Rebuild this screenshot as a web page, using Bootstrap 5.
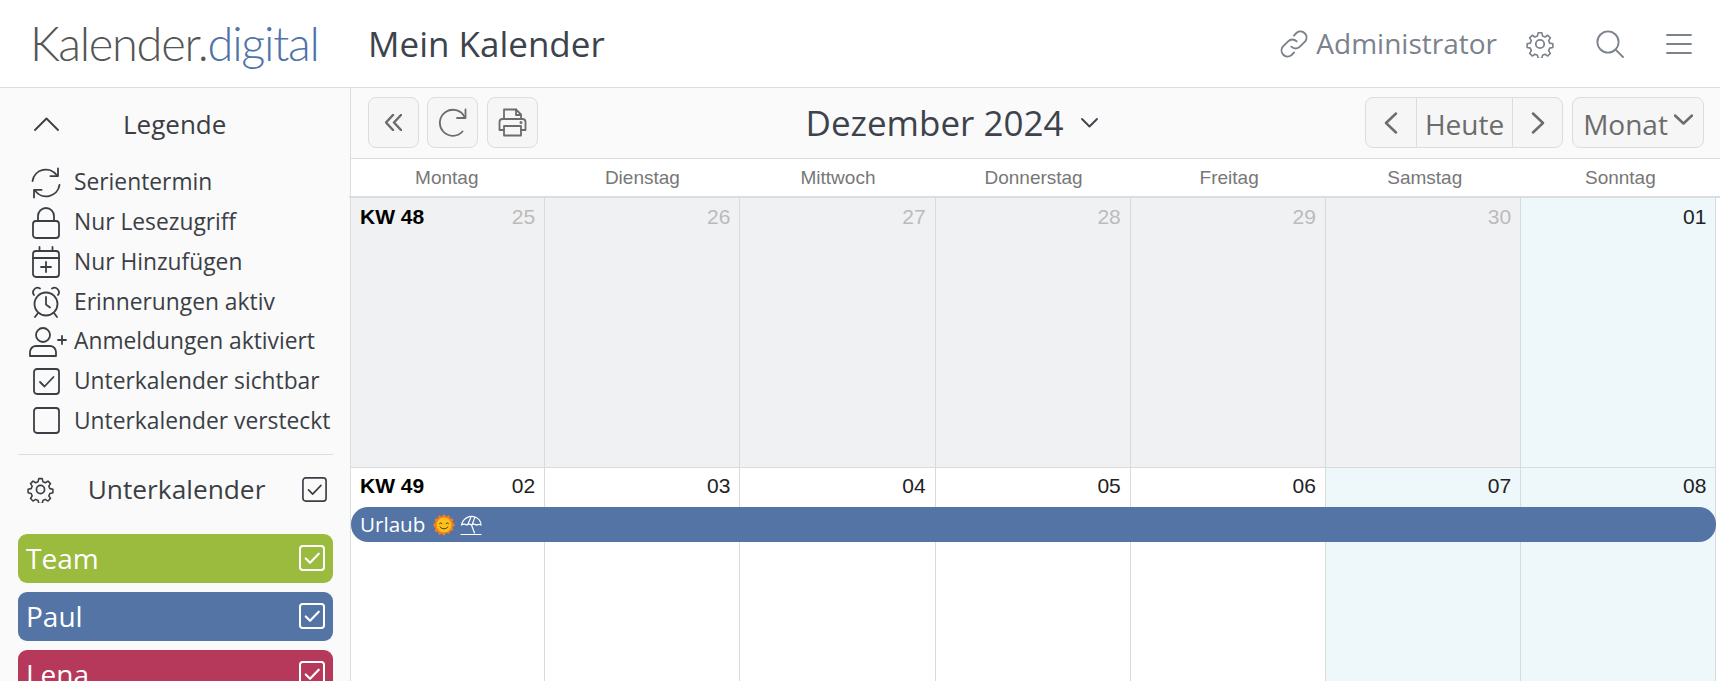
<!DOCTYPE html>
<html lang="de">
<head>
<meta charset="utf-8">
<title>Kalender.digital</title>
<link href="https://cdn.jsdelivr.net/npm/bootstrap@5.3.0/dist/css/bootstrap.min.css" rel="stylesheet">
<style>
html,body{height:100%;overflow:hidden}
body{font-family:"Open Sans",sans-serif;color:#3b3f45;background:#fff}
svg{fill:none;stroke:currentColor;stroke-width:1.8;stroke-linecap:round;stroke-linejoin:round;flex:none}
.topbar{height:88px;border-bottom:1px solid #ddd;padding:0 28px 0 30px}
.logo-text{font-family:"Lato",sans-serif;font-weight:300;font-size:47px;letter-spacing:-1.3px;color:#555;width:338px;line-height:1}
.logo-text span{color:#4f73a8}
.page-title{font-size:35px;color:#3c434c;line-height:1}
.admin-link{font-size:28px;color:#7b828b;margin-right:29px;gap:6px}
.admin-link span{margin-top:-2px}
.top-icon{color:#7b828b;margin-left:42px}
.app-body{height:593px}
.side-panel{width:351px;background:#fafafa;border-right:1px solid #ddd;padding:0 17px 0 18px;overflow:hidden}
.legend-head{height:75px;font-size:26px;padding:0 0 3px 16px}
.legend-head span{margin-left:64px}
.legend-row{height:39.7px;font-size:22.8px;line-height:1;gap:0;white-space:nowrap}
.legend-icon{width:56px;display:flex;justify-content:center}
.user-plus{margin-left:4px}
.side-sep{border-top:1px solid #ddd;margin:13px 0 0;opacity:1}
.sub-head{height:79px;font-size:26.3px;padding:0 6px 10px 9px}
.sub-head span{margin-left:-3px}
.sub-chip{height:49px;border-radius:9px;color:#fff;font-size:28px;padding:0 8px 0 8px;margin-bottom:9px}
.sub-chip svg{stroke-width:2.2}
.chip-team{background:#9abb3d}
.chip-paul{background:#5474a6}
.chip-lena{background:#b6395c}
.main-panel{flex:1;min-width:0;background:#fafafa}
.tool-bar{height:70px;padding:9px 16px 0 17px;align-items:flex-start}
.left-tools{gap:8px}
.left-tools .print-btn{margin-left:1px}
.tool-btn{width:51px;height:51px;padding:0;background:#f6f6f6;border:1px solid #ddd;border-radius:8px;color:#6c6c6c;display:flex;align-items:center;justify-content:center;font-size:28px}
.tool-btn:hover{background:#f6f6f6;border-color:#ddd;color:#6c6c6c}
.tool-btn .bold-icon{stroke-width:2.5}
.tool-label{padding-top:2px}
.tool-month{width:132px;margin-left:9px;gap:6px}
.tool-month svg{margin-bottom:6px}
.nav-group .tool-btn{width:51px}
.nav-group .first-btn{width:52px}
.nav-group .tool-wide{width:97px}
.month-title{font-size:35px;color:#3c434c;line-height:1;gap:17px;height:51px}
.cal-grid{background:#fff;border-top:1px solid #ddd;height:523px}
.cal-row{display:grid;grid-template-columns:194.2px repeat(6,195.2px);width:1365.2px}
.cal-head{height:39px;border-bottom:2px solid #dcdde0;font-family:"Liberation Sans",sans-serif;font-size:19px;color:#777;grid-template-columns:repeat(7,195.6px);width:1371.3px;margin-left:-2px;padding-left:0}
.cal-head div{text-align:center;line-height:38px}
.cal-cell{border-right:1px solid #d8dadc;font-family:"Liberation Sans",sans-serif;font-size:21px;color:#222;padding:5px 9px 0;line-height:26px}
.row-first .cal-cell{height:270px;border-bottom:1px solid #d8dadc;padding-top:6px}
.row-second .cal-cell{height:214px}
.cell-past{background:#f0f1f3;color:#bbb}
.cell-free{background:#eef8fb}
.week-no{font-weight:700;color:#000}
.event-bar{position:absolute;left:0;top:39px;width:100%;height:35px;border-radius:17px;background:#5474a6;color:#fff;font-size:20.6px;padding:0 9px;gap:8px}
.event-bar .beach-icon{margin-left:-3px;stroke-width:1.2}
.event-bar .sun-face{stroke-width:1}
</style>
</head>
<body>
<nav class="navbar topbar d-flex align-items-center flex-nowrap">
  <div class="d-flex align-items-center">
    <div class="logo-text">Kalender.<span>digital</span></div>
    <div class="page-title">Mein Kalender</div>
  </div>
  <div class="d-flex align-items-center">
    <div class="admin-link d-flex align-items-center">
      <svg width="32" height="32" viewBox="0 0 30 30"><path d="M12.5 17.5a5.6 5.6 0 0 0 8 0l5-5a5.7 5.7 0 0 0-8-8l-2.600 2.600"/><path d="M17.5 12.5a5.6 5.6 0 0 0-8 0l-5 5a5.7 5.7 0 0 0 8 8l2.600-2.600"/></svg>
      <span>Administrator</span>
    </div>
    <svg class="top-icon m-0" width="28" height="28" viewBox="0 0 28 28"><circle cx="14" cy="14" r="4.200"/><path d="M12 1.500h4l.8 3.500 2.800 1.200 3-1.900 2.900 2.900-1.900 3 1.200 2.800 3.500.8v4l-3.500.8-1.200 2.800 1.900 3-2.900 2.900-3-1.900-2.800 1.200-.8 3.500h-4l-.8-3.500-2.800-1.200-3 1.900-2.900-2.900 1.900-3-1.200-2.800-3.500-.8v-4l3.500-.8 1.200-2.800-1.900-3 2.900-2.900 3 1.900 2.800-1.200z" transform="translate(1.400 1.400) scale(.9)"/></svg>
    <svg class="top-icon" width="28" height="28" viewBox="0 0 28 28"><circle cx="12" cy="12" r="10.600"/><path d="M19.600 19.600l7.400 7.400"/></svg>
    <svg class="top-icon" width="26" height="22" viewBox="0 0 26 22"><path d="M1 2h24M1 11h24M1 20h24"/></svg>
  </div>
</nav>
<div class="d-flex app-body">
  <aside class="side-panel">
    <div class="legend-head d-flex align-items-center">
      <svg width="25" height="14" viewBox="0 0 25 14"><path d="M1 13L12.500 1.500 24 13"/></svg>
      <span>Legende</span>
    </div>
    <div class="legend-row d-flex align-items-center"><div class="legend-icon"><svg width="32" height="32" viewBox="0 0 32 32"><path d="M2.500 14A13.500 13.500 0 0 1 27 8.500"/><path d="M28 1.500v7.600h-7.600"/><path d="M29.500 18A13.500 13.500 0 0 1 5 23.500"/><path d="M4 30.500v-7.600h7.600"/></svg></div>Serientermin</div>
    <div class="legend-row d-flex align-items-center"><div class="legend-icon"><svg width="28" height="32" viewBox="0 0 28 32"><rect x="1" y="14" width="26" height="17" rx="3"/><path d="M6 14V9a8 8 0 0 1 16 0v5"/></svg></div>Nur Lesezugriff</div>
    <div class="legend-row d-flex align-items-center"><div class="legend-icon"><svg width="28" height="32" viewBox="0 0 28 32"><rect x="1" y="5" width="26" height="26" rx="3"/><path d="M1 12h26M7.500 1v4M20.500 1v4M14 16v10M9 21h10"/></svg></div>Nur Hinzufügen</div>
    <div class="legend-row d-flex align-items-center"><div class="legend-icon"><svg width="28" height="32" viewBox="0 0 28 32"><circle cx="14" cy="18" r="11.500"/><path d="M14 11v7.500l4 3M2 9a4.500 4.500 0 0 1 6-6.500M26 9a4.500 4.500 0 0 0-6-6.500M6 27l-3 4M22 27l3 4"/></svg></div>Erinnerungen aktiv</div>
    <div class="legend-row d-flex align-items-center"><div class="legend-icon"><svg class="user-plus" width="38" height="30" viewBox="0 0 38 30"><circle cx="14" cy="8" r="7"/><path d="M1 29v-4a6 6 0 0 1 6-6h14a6 6 0 0 1 6 6v4z"/><path d="M29 13h8M33 9v8"/></svg></div>Anmeldungen aktiviert</div>
    <div class="legend-row d-flex align-items-center"><div class="legend-icon"><svg width="27" height="27" viewBox="0 0 27 27"><rect x="1" y="1" width="25" height="25" rx="3"/><path d="M7 14l4.500 4.500L20.500 9"/></svg></div>Unterkalender sichtbar</div>
    <div class="legend-row d-flex align-items-center"><div class="legend-icon"><svg width="27" height="27" viewBox="0 0 27 27"><rect x="1" y="1" width="25" height="25" rx="3"/></svg></div>Unterkalender versteckt</div>
    <hr class="side-sep">
    <div class="sub-head d-flex align-items-center justify-content-between">
      <svg width="27" height="27" viewBox="0 0 28 28"><circle cx="14" cy="14" r="4.200"/><path d="M12 1.500h4l.8 3.500 2.800 1.200 3-1.900 2.900 2.900-1.900 3 1.200 2.800 3.500.8v4l-3.500.8-1.200 2.800 1.900 3-2.900 2.900-3-1.900-2.800 1.200-.8 3.500h-4l-.8-3.500-2.800-1.200-3 1.900-2.900-2.900 1.900-3-1.200-2.800-3.500-.8v-4l3.500-.8 1.200-2.800-1.900-3 2.900-2.900 3 1.900 2.800-1.200z" transform="translate(1.400 1.400) scale(.9)"/></svg>
      <span>Unterkalender</span>
      <svg width="25" height="25" viewBox="0 0 27 27"><rect x="1" y="1" width="25" height="25" rx="3"/><path d="M7 14l4.500 4.500L20.500 9"/></svg>
    </div>
    <div class="sub-chip chip-team d-flex align-items-center justify-content-between"><span>Team</span><svg width="26" height="26" viewBox="0 0 27 27"><rect x="1" y="1" width="25" height="25" rx="3"/><path d="M7 14l4.500 4.500L20.500 9"/></svg></div>
    <div class="sub-chip chip-paul d-flex align-items-center justify-content-between"><span>Paul</span><svg width="26" height="26" viewBox="0 0 27 27"><rect x="1" y="1" width="25" height="25" rx="3"/><path d="M7 14l4.500 4.500L20.500 9"/></svg></div>
    <div class="sub-chip chip-lena d-flex align-items-center justify-content-between"><span>Lena</span><svg width="26" height="26" viewBox="0 0 27 27"><rect x="1" y="1" width="25" height="25" rx="3"/><path d="M7 14l4.500 4.500L20.500 9"/></svg></div>
  </aside>
  <main class="main-panel">
    <div class="tool-bar d-flex justify-content-between">
      <div class="d-flex left-tools">
        <button type="button" class="btn tool-btn"><svg class="bold-icon" width="17" height="17" viewBox="0 0 17 17"><path d="M8 1L1 8.500 8 16M16 1L9 8.500 16 16"/></svg></button>
        <button type="button" class="btn tool-btn"><svg width="29" height="29" viewBox="0 0 29 29"><path d="M24.500 23.500A13 13 0 1 1 26.500 9"/><path d="M27.500 1.500v8.500H19"/></svg></button>
        <button type="button" class="btn tool-btn print-btn"><svg width="29" height="29" viewBox="0 0 29 29"><path d="M6 11V1.500h12l5 5V11"/><path d="M18 1.500V7h5"/><path d="M6 22H1.500v-8a3 3 0 0 1 3-3h20a3 3 0 0 1 3 3v8H23"/><path d="M6 18h17v9.500H6z"/><circle cx="23" cy="14.500" r=".6"/></svg></button>
      </div>
      <div class="month-title d-flex align-items-center">Dezember 2024<svg width="17" height="10" viewBox="0 0 17 10"><path d="M1 1l7.500 7.500L16 1"/></svg></div>
      <div class="d-flex">
        <div class="btn-group nav-group">
          <button type="button" class="btn tool-btn first-btn"><svg class="bold-icon" width="14" height="22" viewBox="0 0 14 22"><path d="M12 1.500L2 11l10 9.500"/></svg></button>
          <button type="button" class="btn tool-btn tool-wide"><span class="tool-label">Heute</span></button>
          <button type="button" class="btn tool-btn"><svg class="bold-icon" width="14" height="22" viewBox="0 0 14 22"><path d="M2 1.500L12 11 2 20.500"/></svg></button>
        </div>
        <button type="button" class="btn tool-btn tool-month"><span class="tool-label">Monat</span><svg class="bold-icon" width="19" height="11" viewBox="0 0 19 11"><path d="M1 1.500l8.500 8L18 1.500"/></svg></button>
      </div>
    </div>
    <div class="cal-grid">
      <div class="cal-row cal-head">
        <div>Montag</div><div>Dienstag</div><div>Mittwoch</div><div>Donnerstag</div><div>Freitag</div><div>Samstag</div><div>Sonntag</div>
      </div>
      <div class="cal-row row-first">
        <div class="cal-cell cell-past d-flex justify-content-between"><span class="week-no">KW 48</span><span>25</span></div>
        <div class="cal-cell cell-past text-end">26</div>
        <div class="cal-cell cell-past text-end">27</div>
        <div class="cal-cell cell-past text-end">28</div>
        <div class="cal-cell cell-past text-end">29</div>
        <div class="cal-cell cell-past text-end">30</div>
        <div class="cal-cell cell-free text-end">01</div>
      </div>
      <div class="cal-row row-second position-relative">
        <div class="cal-cell d-flex justify-content-between"><span class="week-no">KW 49</span><span>02</span></div>
        <div class="cal-cell text-end">03</div>
        <div class="cal-cell text-end">04</div>
        <div class="cal-cell text-end">05</div>
        <div class="cal-cell text-end">06</div>
        <div class="cal-cell cell-free text-end">07</div>
        <div class="cal-cell cell-free text-end">08</div>
        <div class="event-bar d-flex align-items-center">
          <span>Urlaub</span>
          <svg class="sun-face" width="22" height="22" viewBox="0 0 22 22"><path fill="#f47b20" stroke="none" d="M11 0l2.200 2.400 3-1.200.8 3.100 3.200.5-.5 3.200L22 11l-2.300 2.200.5 3.200-3.200.5-.8 3.100-3-1.200L11 22l-2.200-2.200-3 1.200-.8-3.100-3.200-.5.500-3.200L0 11l2.300-3-.5-3.200 3.200-.5.800-3.100 3 1.200z"/><circle cx="11" cy="11" r="7.500" fill="#fcc21b" stroke="none"/><path d="M6.500 9.500q1.300-1.500 2.500 0M13 9.500q1.300-1.500 2.500 0M7 13q4 4 8 0" stroke="#5a3a1a" fill="none"/></svg>
          <svg class="beach-icon" width="22" height="22" viewBox="0 0 22 22"><path d="M1.500 11C3 4 10 1 15 3s6 6 6 8c-1.500-1-3-1-4.500.2C15 10 13 10 11.500 11 10 10 8 10 6.500 11 5 10 3 10 1.500 11zM11 3L7.500 11M15 3l-3 8M11.500 11l3 8M1 20.500h20"/></svg>
        </div>
      </div>
    </div>
  </main>
</div>
<script src="https://cdn.jsdelivr.net/npm/bootstrap@5.3.0/dist/js/bootstrap.bundle.min.js"></script>
</body>
</html>
